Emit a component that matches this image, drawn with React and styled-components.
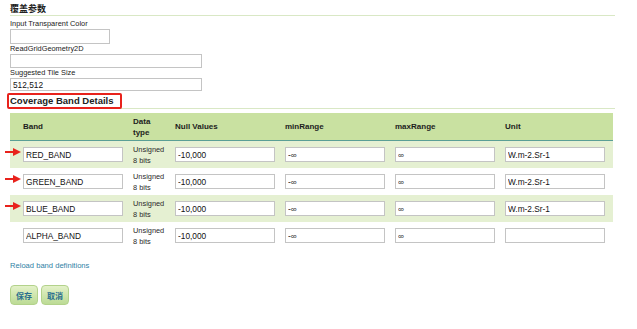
import React from "react"
import styled, { createGlobalStyle } from "styled-components"

const GlobalStyle = createGlobalStyle`
  body {
    margin: 0;
    background: #fff;
    font-family: "Liberation Sans", Arial, "Noto Sans CJK SC", sans-serif;
    color: #222;
  }
`

const Page = styled.div`
  width: 605px;
  padding-left: 10px;
`

const SectionTitle = styled.div`
  font-family: "Liberation Sans", "Noto Sans CJK SC", sans-serif;
  font-weight: 700;
  font-size: 9px;
  line-height: 11px;
  padding-top: 4px;
  border-bottom: 1px solid #d9e8c5;
  margin-bottom: 3px;
`

const Field = styled.div`
  display: flex;
  flex-direction: column;
  align-items: flex-start;
`

const Label = styled.label`
  font-size: 7.4px;
  line-height: 10px;
  color: #222;
`

const TextInput = styled.input`
  box-sizing: border-box;
  width: ${({ $w }) => $w || 100}px;
  height: ${({ $h }) => $h || 15}px;
  margin: 0;
  padding: 0 2px;
  border: 1px solid #c4c4c4;
  border-radius: 0;
  background: #fff;
  font-family: "Liberation Sans", Arial, sans-serif;
  font-size: 8.3px;
  color: #111;
  outline: none;
`

const Heading = styled.div`
  position: relative;
  margin-top: 2px;
  margin-bottom: 4px;
  font-weight: 700;
  font-size: 9.5px;
  line-height: 14px;
  padding-top: 1px;
  border-bottom: 1px solid #d9e8c5;
`

const Highlight = styled.span`
  position: absolute;
  left: -3px;
  top: 0;
  width: 115px;
  height: 16px;
  box-sizing: border-box;
  border: 2px solid #e8221c;
  border-radius: 2px;
`

const Grid = styled.div`
  width: 603px;
`

const Row = styled.div`
  display: grid;
  grid-template-columns: 100px 32px 100px 100px 100px 100px;
  column-gap: 10px;
  align-items: center;
  padding: 0 8px 0 13px;
  height: 27px;
  background: ${({ $shade }) => ($shade ? "#e5f0d2" : "#fff")};
`

const HeadRow = styled(Row)`
  background: #c9e1a1;
  border-bottom: 1px solid #5a9f96;
`

const HeadCell = styled.div`
  font-weight: 700;
  font-size: 8px;
  line-height: 11px;
  color: #1d1d1d;
`

const TypeCell = styled.div`
  font-size: 7.4px;
  line-height: 11px;
  color: #2a2a2a;
`

const BandCell = styled.div`
  position: relative;
  display: flex;
`

const Arrow = styled.svg`
  position: absolute;
  left: -18px;
  top: 1px;
`

const ReloadLink = styled.a`
  display: block;
  margin-top: 12px;
  font-size: 7.6px;
  line-height: 10px;
  color: #2f82a5;
  text-decoration: none;
`

const Actions = styled.div`
  display: flex;
  gap: 3px;
  margin-top: 14px;
`

const Button = styled.button`
  box-sizing: border-box;
  height: 20px;
  padding: 0 5px;
  border: 1px solid #b3d28b;
  border-radius: 4px;
  background: linear-gradient(#e3f1c8, #bcdb95);
  font-family: "Noto Sans CJK SC", sans-serif;
  font-weight: 700;
  font-size: 8px;
  color: #2a6f8f;
`

const bands = [
  { name: "RED_BAND", unit: "W.m-2.Sr-1", mark: true },
  { name: "GREEN_BAND", unit: "W.m-2.Sr-1", mark: true },
  { name: "BLUE_BAND", unit: "W.m-2.Sr-1", mark: true },
  { name: "ALPHA_BAND", unit: "", mark: false },
]

const RedArrow = () => (
  <Arrow width="17" height="8" viewBox="0 0 17 8">
    <line x1="0" y1="4" x2="11" y2="4" stroke="#e8221c" strokeWidth="2" />
    <polygon points="8,0 16,4 8,8" fill="#e8221c" />
  </Arrow>
)

export default function App() {
  return (
    <>
      <GlobalStyle />
      <Page>
        <SectionTitle>覆盖参数</SectionTitle>
        <Field>
          <Label>Input Transparent Color</Label>
          <TextInput $w={100} defaultValue="" />
        </Field>
        <Field>
          <Label>ReadGridGeometry2D</Label>
          <TextInput $w={192} $h={14} defaultValue="" />
        </Field>
        <Field>
          <Label>Suggested Tile Size</Label>
          <TextInput $w={192} $h={13} defaultValue="512,512" />
        </Field>

        <Heading>
          Coverage Band Details
          <Highlight />
        </Heading>

        <Grid>
          <HeadRow>
            <HeadCell>Band</HeadCell>
            <HeadCell>Data<br />type</HeadCell>
            <HeadCell>Null Values</HeadCell>
            <HeadCell>minRange</HeadCell>
            <HeadCell>maxRange</HeadCell>
            <HeadCell>Unit</HeadCell>
          </HeadRow>
          {bands.map((b, i) => (
            <Row key={b.name} $shade={i % 2 === 0}>
              <BandCell>
                {b.mark && <RedArrow />}
                <TextInput defaultValue={b.name} />
              </BandCell>
              <TypeCell>Unsigned<br />8 bits</TypeCell>
              <TextInput defaultValue="-10,000" />
              <TextInput defaultValue="-∞" />
              <TextInput defaultValue="∞" />
              <TextInput defaultValue={b.unit} />
            </Row>
          ))}
        </Grid>

        <ReloadLink href="#">Reload band definitions</ReloadLink>

        <Actions>
          <Button>保存</Button>
          <Button>取消</Button>
        </Actions>
      </Page>
    </>
  )
}
